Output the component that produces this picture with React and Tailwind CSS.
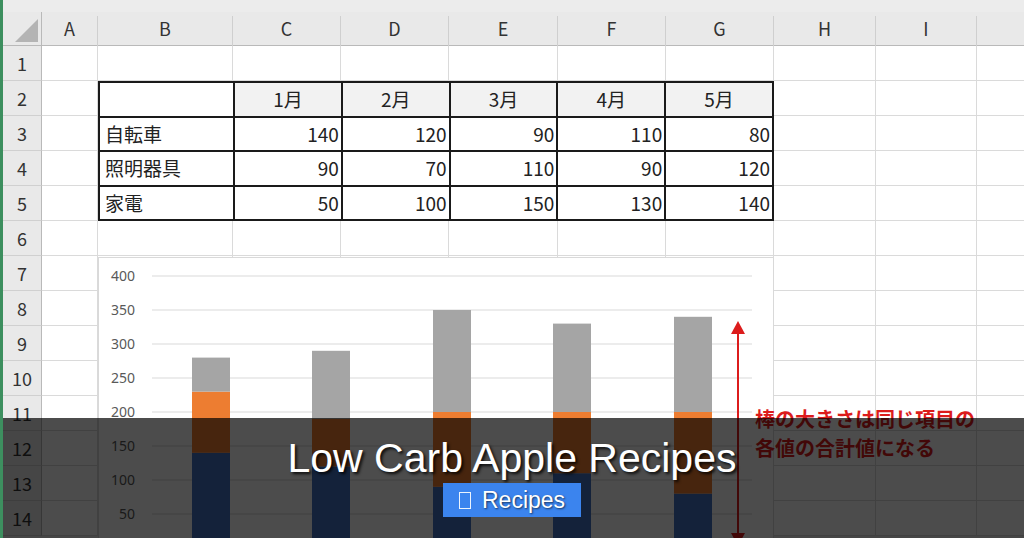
import React from 'react';

const letters = ['A', 'B', 'C', 'D', 'E', 'F', 'G', 'H', 'I', ''];
const months = ['1月', '2月', '3月', '4月', '5月'];
const items = [
  { name: '自転車', vals: [140, 120, 90, 110, 80] },
  { name: '照明器具', vals: [90, 70, 110, 90, 120] },
  { name: '家電', vals: [50, 100, 150, 130, 140] },
];
const seriesColors = ['#4472c4', '#ed7d31', '#a5a5a5'];
const barX = [94, 214, 335, 455, 576];
const yOf = (v) => 291 - v * 0.68;

const inTable = (row, col) => row >= 2 && row <= 5 && col >= 1 && col <= 6;

function DataTable() {
  return (
    <table className="col-start-3 col-end-9 row-start-3 row-end-7 w-full h-full border-collapse text-[19px] text-[#222]">
      <tbody>
        <tr>
          <td className="w-[135px] border-2 border-[#1a1a1a] bg-white" />
          {months.map((m) => (
            <td key={m} className="border-2 border-[#1a1a1a] bg-[#f2f2f2] text-center">
              {m}
            </td>
          ))}
        </tr>
        {items.map((it) => (
          <tr key={it.name}>
            <td className="border-2 border-[#1a1a1a] bg-white pl-[5px]">{it.name}</td>
            {it.vals.map((v, i) => (
              <td key={i} className="border-2 border-[#1a1a1a] bg-white text-right pr-[2px]">
                {v}
              </td>
            ))}
          </tr>
        ))}
      </tbody>
    </table>
  );
}

function StackedChart() {
  return (
    <div className="absolute left-[95px] top-[257px] w-[676px] h-[300px] bg-white border border-[#d9d9d9]">
      <svg width="676" height="300" className="absolute -left-px -top-px">
        {[400, 350, 300, 250, 200, 150, 100, 50].map((v) => (
          <g key={v}>
            <line x1="54" x2="654" y1={yOf(v)} y2={yOf(v)} stroke="#d9d9d9" strokeWidth="1" />
            <text
              x="37"
              y={yOf(v) + 5}
              textAnchor="end"
              fontSize="14"
              fill="#595959"
              fontFamily="'Noto Sans', sans-serif"
            >
              {v}
            </text>
          </g>
        ))}
        {barX.map((x, i) => {
          let cum = 0;
          return (
            <g key={i}>
              {items.map((it, s) => {
                const v = it.vals[i];
                const bottom = yOf(cum);
                cum += v;
                const top = yOf(cum);
                return <rect key={s} x={x} y={top} width="38" height={bottom - top} fill={seriesColors[s]} />;
              })}
            </g>
          );
        })}
        {/* total-height arrow */}
        <line x1="640" x2="640" y1="74" y2="280" stroke="#dc1c1c" strokeWidth="2" />
        <polygon points="640,64 633,77 647,77" fill="#dc1c1c" />
        <polygon points="640,289 633,276 647,276" fill="#dc1c1c" />
      </svg>
    </div>
  );
}

export default function App() {
  const rows = Array.from({ length: 14 }, (_, i) => i + 1);
  return (
    <div className="relative w-[1024px] h-[538px] overflow-hidden bg-[#e9e9e9] border-l-[3px] border-[#3d8f5f] font-['Noto_Sans_CJK_JP',sans-serif]">
      <div className="h-[12px] bg-[#ececec]" />
      <div className="grid grid-cols-[39px_56px_135px_108px_108px_109px_108px_108px_102px_101px_60px] grid-rows-[34px_repeat(14,35px)]">
        {/* corner */}
        <div className="relative bg-[#e9e9e9] border-b border-r border-[#b9b9b9]">
          <svg width="26" height="24" className="absolute left-[10px] top-[7px]">
            <polygon points="25,0 25,23 2,23" fill="#b4b4b4" />
          </svg>
        </div>
        {letters.map((l, i) => (
          <div
            key={i}
            className="flex items-center justify-center bg-[#e9e9e9] border-b border-[#b9b9b9] text-[18px] text-[#333]"
          >
            <div className="flex-1 text-center">{l}</div>
            <div className="w-px h-[30px] mt-[4px] bg-[#cfcfcf]" />
          </div>
        ))}

        <DataTable />

        {rows.map((r) => (
          <React.Fragment key={r}>
            <div className="flex items-center justify-center bg-[#e9e9e9] border-b border-r border-b-[#d0d0d0] border-r-[#b9b9b9] text-[18px] text-[#333]">
              {r}
            </div>
            {letters.map((_, c) =>
              inTable(r, c) ? null : (
                <div key={c} className="bg-white border-b border-r border-[#dadada]" />
              )
            )}
          </React.Fragment>
        ))}
      </div>

      <StackedChart />

      <div className="absolute left-[752px] top-[404px] text-[20px] leading-[29px] font-bold text-[#dc1c1c]">
        <p>棒の大きさは同じ項目の</p>
        <p>各値の合計値になる</p>
      </div>

      {/* caption band */}
      <div className="absolute left-[-3px] right-0 top-[418px] bottom-0 bg-black/70 flex flex-col items-center pt-[20px] font-['Liberation_Sans',Arial,sans-serif] text-white">
        <h1 className="text-[41px] leading-[41px] [text-shadow:2px_2px_3px_rgba(0,0,0,0.85)]">
          Low Carb Apple Recipes
        </h1>
        <div className="mt-[4px] h-[34px] w-[138px] bg-[#3b84ee] flex items-center pl-[16px] text-[23px] [text-shadow:1px_1px_2px_rgba(0,0,0,0.6)]">
          <span className="inline-block w-[12px] h-[17px] border border-white/90 mr-[11px]" />
          Recipes
        </div>
      </div>
    </div>
  );
}
